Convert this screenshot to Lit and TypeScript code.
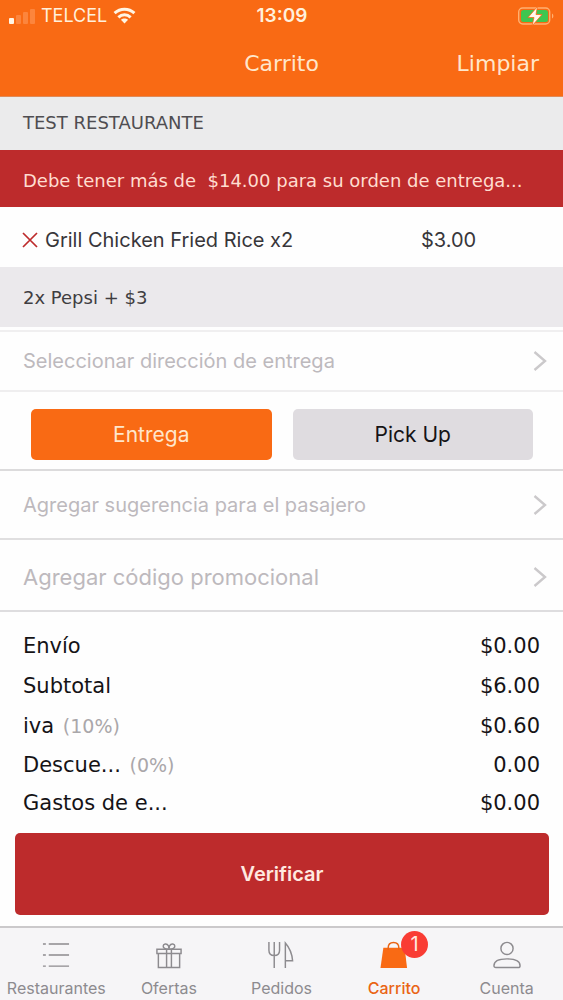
import { LitElement, html, css, svg } from "lit";
import { customElement, state } from "lit/decorators.js";
import { classMap } from "lit/directives/class-map.js";

type Tab = { id: string; label: string; badge?: number };
type Line = { label: string; rate?: string; amount: string; tight?: boolean };

const TABS: Tab[] = [
  { id: "restaurants", label: "Restaurantes" },
  { id: "offers", label: "Ofertas" },
  { id: "orders", label: "Pedidos" },
  { id: "cart", label: "Carrito", badge: 1 },
  { id: "account", label: "Cuenta" },
];

const LINES: Line[] = [
  { label: "Envío", amount: "$0.00" },
  { label: "Subtotal", amount: "$6.00" },
  { label: "iva", rate: "(10%)", amount: "$0.60" },
  { label: "Descue...", rate: "(0%)", amount: "0.00", tight: true },
  { label: "Gastos de e...", amount: "$0.00", tight: true },
];

const GLYPHS: Record<string, unknown> = {
  restaurants: svg`
    <path d="M2 3h3M2 14.500h3M2 26h3M8 3h21M8 14.500h21M8 26h21" />`,
  offers: svg`
    <path d="M3 8.500h25v4.500h-25zM4.500 13v14.500h22v-14.500M13 8.500v19M18 8.500v19" />
    <path d="M14.500 8.500c-3 0-5-1-5-3.200s3.500-3.600 5.500-.3l.5 3.500.5-3.500c2-3.300 5.500-1.900 5.500.3s-2 3.200-5 3.200" />`,
  orders: svg`
    <path d="M3 1v8.500c0 3.500 2 5.500 5.500 5.500s5.500-2 5.500-5.500v-8.500M8.500 1v27" />
    <path d="M20 28v-26c4 4.500 7 11 7.500 18.500h-7.500" />`,
  cart: svg`
    <path class="solid" d="M4.500 7h22l2.500 21h-27.500z" />
    <path d="M9.500 9v-2c0-3.500 2.200-5.500 5.500-5.500s5.500 2 5.500 5.500v2" />`,
  account: svg`
    <circle cx="15.500" cy="7.700" r="6.300" />
    <path d="M2 25.500c0-4.800 6-7 13.500-7s13.500 2.200 13.500 7c0 1.300-.7 2-2 2h-23c-1.300 0-2-.7-2-2z" />`,
};

const base = css`
  :host {
    display: block;
    font-family: "DejaVu Sans", Verdana, sans-serif;
  }
  * {
    box-sizing: border-box;
  }
  button {
    margin: 0;
    padding: 0;
    border: 0;
    background: none;
    color: inherit;
    font: inherit;
    cursor: pointer;
  }
  svg {
    display: block;
    flex: none;
  }
`;

@customElement("status-bar")
class StatusBar extends LitElement {
  static styles = [
    base,
    css`
      .bar {
        display: grid;
        grid-template-columns: 1fr auto 1fr;
        align-items: center;
        height: 31px;
        padding: 0 8px 0 9px;
        color: #fff0dc;
        font-family: Inter, "Liberation Sans", sans-serif;
        font-size: 18px;
      }
      .carrier {
        display: flex;
        align-items: center;
        gap: 6px;
      }
      .time {
        font-size: 19px;
        font-weight: 600;
      }
      .battery {
        justify-self: end;
      }
    `,
  ];

  render() {
    return html`
      <div class="bar">
        <div class="carrier">
          <svg width="26" height="18" viewBox="0 0 26 18" fill="#ff9f66" aria-hidden="true">
            <rect x="0" y="11" width="5" height="6" rx="1" fill="#fff5e4" />
            <rect x="7" y="8" width="5" height="9" rx="1" opacity=".5" />
            <rect x="14" y="5" width="5" height="12" rx="1" opacity=".5" />
            <rect x="21" y="2" width="5" height="15" rx="1" opacity=".5" />
          </svg>
          <span>TELCEL</span>
          <svg width="23" height="17" viewBox="0 0 24 18" aria-hidden="true">
            <g fill="none" stroke="#fff5e4" stroke-width="3.200">
              <path d="M1.500 6.500c6-5.600 15-5.600 21 0" />
              <path d="M5.500 10.900c3.800-3.500 9.200-3.500 13 0" />
            </g>
            <path d="M12 17.500l-3.800-3.900c2.200-2 5.400-2 7.600 0z" fill="#fff5e4" />
          </svg>
        </div>
        <time class="time">13:09</time>
        <svg class="battery" width="38" height="22" viewBox="0 0 38 22" aria-hidden="true">
          <rect x="1.700" y="3" width="31" height="16" rx="4" fill="none" stroke="#ffb070" stroke-width="1.400" />
          <path d="M35 8.500c1.800.8 1.800 4.200 0 5z" fill="#ffb070" />
          <rect x="4" y="5" width="27" height="12" rx="2.500" fill="#3fc650" />
          <path d="M20.500 1.500l-9.500 11h6l-2 8.500 10-11.500h-6z" fill="#fff8ec" stroke="#f96a14" stroke-width=".8" />
        </svg>
      </div>
    `;
  }
}

@customElement("option-row")
class OptionRow extends LitElement {
  static styles = [
    base,
    css`
      .row {
        display: flex;
        align-items: center;
        justify-content: space-between;
        width: 100%;
        height: 100%;
        padding: 0 16px 0 23px;
        color: #bdb9bd;
        font-family: Inter, "Liberation Sans", sans-serif;
        font-size: inherit;
        line-height: 24px;
        text-align: left;
      }
    `,
  ];

  render() {
    return html`
      <button class="row" type="button">
        <slot></slot>
        <svg width="14" height="22" viewBox="0 0 14 22" fill="none" stroke="#cbc9cb" stroke-width="2.400" aria-hidden="true">
          <path d="M1.500 2l10.500 9-10.500 9" />
        </svg>
      </button>
    `;
  }
}

@customElement("tab-bar")
class TabBar extends LitElement {
  @state() private active = "cart";

  static styles = [
    base,
    css`
      .tabs {
        display: grid;
        grid-template-columns: repeat(5, 1fr);
        height: 75px;
        border-top: 2px solid #cbc9cb;
        background: #f6f5f7;
      }
      .tab {
        display: flex;
        flex-direction: column;
        align-items: center;
        gap: 8px;
        padding-top: 13px;
        color: #8d8b8f;
        font-family: Inter, "Liberation Sans", sans-serif;
        font-size: 16px;
        line-height: 20px;
      }
      .active {
        color: #ea6414;
        font-weight: 500;
      }
      .icon {
        position: relative;
      }
      .icon svg {
        fill: none;
        stroke: currentColor;
        stroke-width: 1.500;
      }
      .icon .solid {
        fill: #f96a14;
        stroke: none;
      }
      .badge {
        position: absolute;
        top: -10px;
        left: 22px;
        width: 27px;
        height: 27px;
        border-radius: 50%;
        background: #f93c34;
        color: #ffe9e0;
        font-size: 20px;
        font-weight: 400;
        line-height: 27px;
      }
    `,
  ];

  render() {
    return html`
      <nav class="tabs">
        ${TABS.map(
          (tab) => html`
            <button
              type="button"
              class=${classMap({ tab: true, active: tab.id === this.active })}
              @click=${() => (this.active = tab.id)}
            >
              <span class="icon">
                <svg width="30" height="29" viewBox="0 0 31 30" aria-hidden="true">${GLYPHS[tab.id]}</svg>
                ${tab.badge ? html`<span class="badge">${tab.badge}</span>` : ""}
              </span>
              <span>${tab.label}</span>
            </button>
          `
        )}
      </nav>
    `;
  }
}

@customElement("app-root")
class AppRoot extends LitElement {
  @state() private mode = "delivery";

  static styles = [
    base,
    css`
      .screen {
        display: flex;
        flex-direction: column;
        min-height: 100vh;
        background: #fefefe;
        color: #151316;
      }
      .top {
        height: 97px;
        background: #f96a14;
        border-bottom: 1px solid #e08a58;
      }
      .title-row {
        display: grid;
        grid-template-columns: 1fr auto 1fr;
        align-items: center;
        height: 65px;
        padding: 0 24px;
        color: #ffe6cb;
        font-size: 22px;
      }
      .title {
        grid-column: 2;
        margin: 0;
        font-size: 22px;
        font-weight: 400;
      }
      .clear {
        justify-self: end;
      }
      .restaurant {
        height: 53px;
        margin: 0;
        padding: 0 23px;
        background: #ebebec;
        color: #4f4d51;
        font-size: 18px;
        font-weight: 400;
        line-height: 51px;
      }
      .warning {
        height: 57px;
        margin: 0;
        padding: 4px 23px 0;
        background: #bd2b2c;
        color: #ffddd0;
        font-size: 18px;
        line-height: 53px;
        white-space: pre;
        overflow: hidden;
      }
      .item {
        display: grid;
        grid-template-columns: 1fr 142px;
        align-items: center;
        height: 60px;
        padding: 5px 0 0 22px;
        color: #38363a;
        font-family: Inter, "Liberation Sans", sans-serif;
        font-size: 20px;
      }
      .item-name {
        display: flex;
        align-items: center;
        gap: 7px;
      }
      .extras {
        display: flex;
        align-items: center;
        height: 60px;
        padding: 0 23px;
        background: #ebe9ec;
        color: #3f3d41;
        font-size: 18px;
      }
      .address {
        height: 62px;
        margin-top: 3px;
        border-top: 2px solid #f0eff0;
        border-bottom: 2px solid #efeeef;
        font-size: 20px;
      }
      .modes {
        display: grid;
        grid-template-columns: 1fr 1fr;
        gap: 21px;
        padding: 17px 30px 9px 31px;
        border-bottom: 2px solid #dcdbdc;
      }
      .mode {
        height: 51px;
        border-radius: 5px;
        background: #dfdce0;
        color: #151316;
        font-family: Inter, "Liberation Sans", sans-serif;
        font-size: 21px;
      }
      .chosen {
        background: #f96a14;
        color: #ffe6cb;
      }
      .tip {
        height: 69px;
        border-bottom: 2px solid #e0dfe0;
        font-size: 20px;
      }
      .promo {
        height: 72px;
        padding-top: 4px;
        border-bottom: 2px solid #dedddf;
        font-size: 22px;
      }
      .totals {
        width: 100%;
        margin-top: 14px;
        border-collapse: collapse;
        font-size: 21px;
        line-height: 24px;
      }
      .totals tr {
        height: 40px;
      }
      .totals .tight {
        height: 38px;
      }
      .totals th {
        padding: 0 0 0 23px;
        font-weight: 400;
        text-align: left;
      }
      .totals td {
        padding: 0 23px 0 0;
        text-align: right;
      }
      .rate {
        margin-left: 2px;
        color: #aaa7aa;
        font-size: 19px;
      }
      .verify {
        height: 82px;
        margin: 11px 14px 11px 15px;
        border-radius: 5px;
        background: #bd2b2c;
        color: #ffe9e0;
        font-family: Inter, "Liberation Sans", sans-serif;
        font-size: 20px;
        font-weight: 600;
      }
      .foot {
        margin-top: auto;
      }
    `,
  ];

  private modeButton(id: string, label: string) {
    return html`<button
      type="button"
      class=${classMap({ mode: true, chosen: this.mode === id })}
      @click=${() => (this.mode = id)}
    >${label}</button>`;
  }

  render() {
    return html`
      <div class="screen">
        <header class="top">
          <status-bar></status-bar>
          <div class="title-row">
            <h1 class="title">Carrito</h1>
            <button class="clear" type="button">Limpiar</button>
          </div>
        </header>
        <h2 class="restaurant">TEST RESTAURANTE</h2>
        <p class="warning">Debe tener más de  $14.00 para su orden de entrega...</p>
        <div class="item">
          <div class="item-name">
            <button type="button" aria-label="Quitar">
              <svg width="16" height="16" viewBox="0 0 16 16" stroke="#bd2b2c" stroke-width="1.700">
                <path d="M1 1l14 14M15 1l-14 14" />
              </svg>
            </button>
            <span>Grill Chicken Fried Rice x2</span>
          </div>
          <span>$3.00</span>
        </div>
        <div class="extras">2x Pepsi + $3</div>
        <option-row class="address">Seleccionar dirección de entrega</option-row>
        <div class="modes">
          ${this.modeButton("delivery", "Entrega")}${this.modeButton("pickup", "Pick Up")}
        </div>
        <option-row class="tip">Agregar sugerencia para el pasajero</option-row>
        <option-row class="promo">Agregar código promocional</option-row>
        <table class="totals">
          <tbody>
            ${LINES.map(
              (line) => html`
                <tr class=${classMap({ tight: !!line.tight })}>
                  <th scope="row">
                    ${line.label}
                    ${line.rate ? html`<span class="rate">${line.rate}</span>` : ""}
                  </th>
                  <td>${line.amount}</td>
                </tr>
              `
            )}
          </tbody>
        </table>
        <button class="verify" type="button">Verificar</button>
        <tab-bar class="foot"></tab-bar>
      </div>
    `;
  }
}
